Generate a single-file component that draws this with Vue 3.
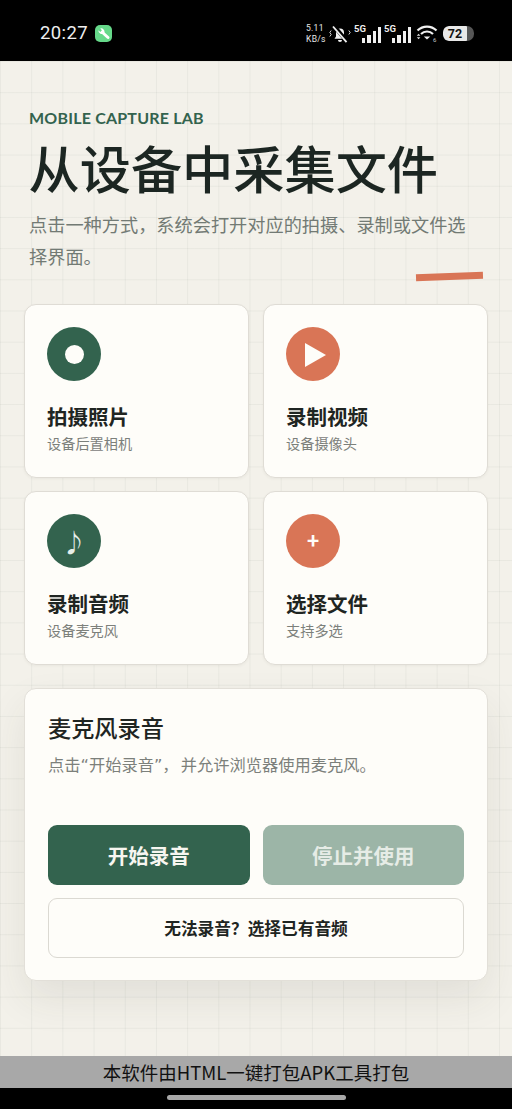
<script setup>
const cards = [
  { title: '拍摄照片', sub: '设备后置相机', tone: 'green', icon: 'dot' },
  { title: '录制视频', sub: '设备摄像头', tone: 'orange', icon: 'play' },
  { title: '录制音频', sub: '设备麦克风', tone: 'green', icon: 'note' },
  { title: '选择文件', sub: '支持多选', tone: 'orange', icon: 'plus' }
]
</script>

<template>
  <div class="phone">
    <header class="status">
      <div class="status-left">
        <span class="time">20:27</span>
        <span class="app-badge">
          <svg viewBox="0 0 17 17" width="17" height="17">
            <path d="M7.500 7.500 13 12.500" stroke="#fff" stroke-width="3" stroke-linecap="round"/>
            <path d="M3.400 5.200 5.300 6.900 6.900 5.300 5.200 3.500A3.400 3.400 0 0 1 9.400 7.800 3.400 3.400 0 0 1 3.400 5.200z" fill="#fff"/>
          </svg>
        </span>
      </div>
      <div class="status-right">
        <span class="speed"><span>5.11</span><span>KB/s</span></span>
        <svg class="bell" viewBox="0 0 22 18" width="22" height="18">
          <path d="M5.500 13.800h11l-1.500-2.300V7.500a4 4 0 0 0-8 0v4z" fill="#f0f0f0"/>
          <path d="M9 15h4a2 2 0 0 1-4 0z" fill="#f0f0f0"/>
          <path d="M4.500 0.500 18.500 17" stroke="#000" stroke-width="4.200"/>
          <path d="M4 1.500 17.500 17.200" stroke="#f0f0f0" stroke-width="1.800"/>
          <path d="M2.200 5.500.8 7.500l1.400 2-1.400 2M19.800 5.500l1.400 2-1.400 2" fill="none" stroke="#e8e8e8" stroke-width=".9"/>
        </svg>
        <span class="signal" v-for="n in 2" :key="n">
          <span class="five-g">5G</span>
          <span class="bars"><i class="b1"></i><i class="b2"></i><i class="b3"></i><i class="b4"></i></span>
        </span>
        <svg class="wifi" viewBox="0 0 22 18" width="22" height="18">
          <path d="M1.500 5.500a13.500 13.500 0 0 1 19 0" fill="none" stroke="#f0f0f0" stroke-width="2.200"/>
          <path d="M5 9a8.500 8.500 0 0 1 12 0" fill="none" stroke="#f0f0f0" stroke-width="2.200"/>
          <path d="M7.800 11.400h6.400L11 14.500z" fill="#f0f0f0"/>
          <path d="M.8 10.800 2.600 8.800 4.400 10.800zM.8 12.300 2.600 14.300 4.400 12.300z" fill="#ddd"/>
          <text x="17" y="16.500" class="wifi-num">6</text>
        </svg>
        <span class="battery"><span class="battery-fill">72</span></span>
      </div>
    </header>

    <main class="page">
      <p class="eyebrow">MOBILE CAPTURE LAB</p>
      <h1 class="title">从设备中采集文件</h1>
      <p class="lead">点击一种方式，系统会打开对应的拍摄、录制或文件选择界面。</p>
      <div class="accent"></div>

      <section class="grid">
        <button v-for="card in cards" :key="card.title" class="card">
          <span class="icon" :class="card.tone">
            <i v-if="card.icon === 'dot'" class="dot"></i>
            <i v-else-if="card.icon === 'play'" class="play"></i>
            <span v-else-if="card.icon === 'note'" class="note">♪</span>
            <span v-else class="plus">+</span>
          </span>
          <strong class="card-title">{{ card.title }}</strong>
          <span class="card-sub">{{ card.sub }}</span>
        </button>
      </section>

      <section class="panel">
        <h2 class="panel-title">麦克风录音</h2>
        <p class="panel-text">点击<span class="quote">“</span>开始录音<span class="quote">”</span><span class="comma">，</span>并允许浏览器使用麦克风。</p>
        <div class="actions">
          <button class="btn primary">开始录音</button>
          <button class="btn disabled">停止并使用</button>
        </div>
        <button class="btn ghost">无法录音？选择已有音频</button>
      </section>
    </main>

    <footer class="banner">本软件由HTML一键打包APK工具打包</footer>
    <div class="navbar"><span class="pill"></span></div>
  </div>
</template>

<style>
html, body { margin: 0; padding: 0; background: #000; }
</style>

<style scoped>
.phone {
  width: 512px;
  height: 1109px;
  display: flex;
  flex-direction: column;
  overflow: hidden;
  font-family: "Noto Sans CJK SC", "Noto Sans", sans-serif;
  color: #1d2723;
}
.status {
  height: 61px;
  flex: none;
  background: #000;
  display: flex;
  align-items: center;
  justify-content: space-between;
  padding: 6px 38px 0 40px;
  box-sizing: border-box;
}
.status-left { display: flex; align-items: center; gap: 7px; }
.time { color: #eee; font: 400 18.500px/1 Roboto, sans-serif; letter-spacing: .4px; }
.app-badge {
  width: 17px; height: 17px; border-radius: 5px; background: #66d98a;
  display: block;
}
.app-badge svg { display: block; }
.status-right { display: flex; align-items: center; color: #e8e8e8; }
.speed {
  display: flex; flex-direction: column; align-items: flex-start;
  font: 400 8.500px/10.500px Roboto, sans-serif; width: 23px; letter-spacing: .3px;
}
.bell { display: block; }
.signal { display: block; height: 18px; margin-left: 3px; position: relative; width: 27px; }
.five-g { position: absolute; left: 0; top: 0; font: 700 9.500px/8px Roboto, sans-serif; color: #eee; }
.bars { position: absolute; right: 0; bottom: 0; display: flex; align-items: flex-end; gap: 2px; }
.bars i { width: 3.200px; background: #f0f0f0; display: block; }
.bars .b1 { height: 5px; }
.bars .b2 { height: 8px; }
.bars .b3 { height: 12px; }
.bars .b4 { height: 16px; }
.wifi { margin-left: 5px; display: block; }
.wifi-num { font: 400 6px Roboto, sans-serif; fill: #ccc; }
.battery {
  width: 31px; height: 15px; border-radius: 6px 7px 7px 6px; margin-left: 5px;
  background: #565656; overflow: hidden; display: block;
}
.battery-fill {
  display: flex; align-items: center; justify-content: center;
  width: 24px; height: 15px; background: #e8e8e8; color: #111;
  font: 700 12.500px/15px Roboto, sans-serif; border-radius: 6px 1px 1px 6px;
}

.page {
  flex: 1;
  min-height: 0;
  box-sizing: border-box;
  padding: 47px 24px 0;
  background-color: #f3f1ea;
  background-image:
    linear-gradient(rgba(40, 60, 50, .05) 1px, transparent 1px),
    linear-gradient(90deg, rgba(40, 60, 50, .05) 1px, transparent 1px);
  background-size: 31.200px 31.200px;
}
.eyebrow {
  margin: 0 0 0 5px;
  font: 700 16px/20px Lato, "Noto Sans", sans-serif;
  color: #33634e;
  letter-spacing: .2px;
}
.title {
  margin: 6px 0 0 4.500px;
  font-size: 51.200px;
  line-height: 66px;
  font-weight: 500;
  color: #1c2622;
  white-space: nowrap;
}
.lead {
  margin: 8px 0 0 5px;
  font-size: 18.200px;
  line-height: 32px;
  color: #727a74;
  width: 440px;
}
.accent {
  width: 67px;
  height: 7px;
  margin: 1px 5px 0 auto;
  background: #d97556;
  transform: rotate(-2deg);
}
.grid {
  display: grid;
  grid-template-columns: 225px 225px;
  column-gap: 14px;
  row-gap: 13.800px;
  margin-top: 24px;
}
.card {
  height: 173.500px;
  box-sizing: border-box;
  display: flex;
  flex-direction: column;
  align-items: flex-start;
  padding: 22px 22px 0;
  background: #fefdf9;
  border: 1.500px solid #dfdcd5;
  border-radius: 12px;
  box-shadow: 0 1px 3px rgba(60, 60, 40, .05);
  font-family: inherit;
  text-align: left;
}
.icon {
  width: 54px; height: 54px; border-radius: 50%;
  display: flex; align-items: center; justify-content: center;
  color: #fefdf9; flex: none;
}
.icon.green { background: #33634e; }
.icon.orange { background: #d97556; }
.dot { width: 19px; height: 19px; border-radius: 50%; background: #fefdf9; display: block; }
.play {
  display: block; width: 0; height: 0; margin-left: 5px; margin-top: 1px;
  border-left: 21.500px solid #fefdf9;
  border-top: 12px solid transparent;
  border-bottom: 12px solid transparent;
}
.note { font: 400 25px/1 "Noto Sans CJK SC", sans-serif; color: #e6eee9; }
.plus { font: 500 22px/1 Roboto, sans-serif; }
.card-title { margin-top: 21px; font-size: 20.500px; line-height: 28px; font-weight: 700; color: #1f2522; }
.card-sub { margin-top: 3px; font-size: 14.200px; line-height: 20px; color: #7c807b; }

.panel {
  margin-top: 23.500px;
  height: 293px;
  box-sizing: border-box;
  padding: 22px 23px 0;
  background: #fefdf9;
  border: 1.500px solid #e2dfd8;
  border-radius: 12px;
  box-shadow: 0 18px 40px rgba(60, 60, 40, .09);
}
.panel-title { margin: 0; font-size: 23.200px; line-height: 32px; font-weight: 500; color: #1f2522; }
.panel-text {
  margin: 8px 0 0;
  font-size: 16.250px;
  line-height: 26px;
  color: #7c807b;
  white-space: nowrap;
}
.quote { font-family: "DejaVu Sans", sans-serif; }
.comma { display: inline-block; width: 18.500px; }
.actions {
  display: grid;
  grid-template-columns: 1fr 1fr;
  gap: 13px;
  margin-top: 45.500px;
}
.btn {
  display: block;
  box-sizing: border-box;
  height: 60px;
  border-radius: 9px;
  font-family: inherit;
  border: 0;
  padding: 0;
}
.primary { background: #33634e; color: #f7f6f0; font-size: 20.500px; font-weight: 700; }
.disabled { background: #9cb5a7; color: #e6ece6; font-size: 20.500px; font-weight: 700; }
.ghost {
  width: 100%;
  margin-top: 13px;
  background: #fefdf9;
  border: 1.500px solid #dbd9d2;
  color: #1f2522;
  font-size: 16.700px;
  font-weight: 700;
}

.banner {
  flex: none;
  height: 32px;
  background: #a8a8a8;
  color: #111;
  font-size: 18.500px;
  line-height: 32px;
  text-align: center;
}
.navbar {
  flex: none;
  height: 21px;
  background: #000;
  display: flex;
  justify-content: center;
  padding-top: 7px;
  box-sizing: border-box;
}
.pill { width: 179px; height: 5px; border-radius: 3px; background: #a8a8a8; display: block; }
</style>
